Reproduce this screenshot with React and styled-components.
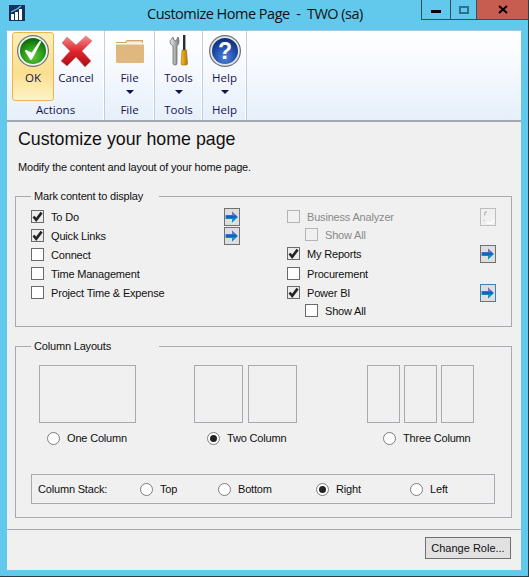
import React from "react";
import styled, { createGlobalStyle } from "styled-components";

const Global = createGlobalStyle`
  html, body { margin: 0; padding: 0; background: #63c9ec; }
  * { box-sizing: border-box; }
`;

const UI_FONT = `"Open Sans", "Noto Sans", "Liberation Sans", sans-serif`;
const FORM_FONT = `"Liberation Sans", Arial, sans-serif`;

const Window = styled.div`
  width: 529px;
  height: 577px;
  background: #63c9ec;
  border-right: 1px solid #2c3e46;
  border-bottom: 1px solid #2c3e46;
  padding: 0 7px 6px 7px;
  display: flex;
  flex-direction: column;
  font-family: ${FORM_FONT};
  font-size: 11px;
  letter-spacing: -0.18px;
  color: #111;
  overflow: hidden;
`;

const TitleBar = styled.div`
  height: 30px;
  flex: none;
  display: flex;
  align-items: flex-start;
  margin-right: -7px;
`;
const AppLogo = styled.svg`
  width: 16px;
  height: 16px;
  margin: 5px 0 0 2px;
  flex: none;
`;
const Title = styled.div`
  margin: 5px 0 0 122px;
  font-family: ${UI_FONT};
  font-size: 14.5px;
  letter-spacing: -0.5px;
  line-height: 18px;
  white-space: pre;
  color: #111;
  flex: 1;
`;
const Controls = styled.div`
  display: flex;
  height: 20px;
  border: 1px solid #33505e;
  border-top: none;
  border-right: none;
  flex: none;
`;
const Control = styled.div`
  width: ${(p) => p.$w}px;
  display: flex;
  align-items: center;
  justify-content: center;
  border-left: ${(p) => (p.$first ? "none" : "1px solid #33505e")};
  background: ${(p) => (p.$close ? "#c75c50" : "transparent")};
`;
const MinGlyph = styled.span`
  width: 10px;
  height: 3px;
  background: #000;
  margin-top: 3px;
`;
const MaxGlyph = styled.span`
  width: 10px;
  height: 8px;
  border: 2px solid #2f6f8e;
`;

const Ribbon = styled.div`
  height: 92px;
  flex: none;
  display: flex;
  background: linear-gradient(#ffffff 0%, #f5f9fe 45%, #e6effa 100%);
  border-top: 1px solid #a9c4d2;
  border-bottom: 2px solid #a3a9b0;
`;
const RibbonGroup = styled.div`
  width: ${(p) => p.$w}px;
  flex: none;
  display: flex;
  flex-direction: column;
  border-right: 1px solid #c4cdd8;
  box-shadow: inset -1px 0 0 #ffffff;
`;
const RibbonItems = styled.div`
  height: 71px;
  flex: none;
  display: flex;
  padding: 1px 0 0 ${(p) => p.$pad || 0}px;
`;
const RibbonButton = styled.div`
  width: ${(p) => p.$w}px;
  height: 69px;
  flex: none;
  display: flex;
  flex-direction: column;
  align-items: center;
  padding-top: 1px;
  border-radius: 3px;
  color: #13134d;
  font-family: ${UI_FONT};
  font-size: 11.5px;
  letter-spacing: 0;
  line-height: 16px;
  border: 1px solid ${(p) => (p.$active ? "#f0b44c" : "transparent")};
  background: ${(p) =>
    p.$active
      ? "linear-gradient(#fdeeb8 0%, #fbe29a 45%, #fbdf8f 60%, #fdf3c6 100%)"
      : "transparent"};
`;
const RibbonIcon = styled.svg`
  width: 34px;
  height: 34px;
  flex: none;
  margin-bottom: 2px;
`;
const Caret = styled.span`
  width: 0;
  height: 0;
  margin-top: 4px;
  border-left: 4px solid transparent;
  border-right: 4px solid transparent;
  border-top: 4px solid #13134d;
`;
const GroupLabel = styled.div`
  flex: 1;
  text-align: center;
  color: #13134d;
  font-family: ${UI_FONT};
  font-size: 11.5px;
  letter-spacing: 0;
  line-height: 16px;
`;

const Main = styled.div`
  flex: 1;
  min-height: 0;
  background: #f0f0f0;
  display: flex;
  flex-direction: column;
  padding: 0 9px 0 8px;
`;
const Heading = styled.h1`
  margin: 7px 0 0 3px;
  font-weight: 400;
  font-size: 17.8px;
  letter-spacing: 0;
  line-height: 20px;
`;
const Description = styled.p`
  margin: 10px 0 0 3px;
  line-height: 16px;
`;

const GroupBox = styled.fieldset`
  margin: ${(p) => p.$top}px 0 0 0;
  padding: 0 15px;
  height: ${(p) => p.$h}px;
  border: 1px solid #a9a9b0;
  min-width: 0;
`;
const Legend = styled.legend`
  width: 128px;
  padding: 0 3px;
  line-height: 14px;
  font-size: 11px;
`;

const OptionGrid = styled.div`
  display: grid;
  grid-template-columns: 209px 209px;
  column-gap: 47px;
  margin-top: 4px;
`;
const OptionColumn = styled.div`
  display: flex;
  flex-direction: column;
`;
const OptionRow = styled.div`
  height: ${(p) => p.$h || 19}px;
  display: flex;
  align-items: center;
  padding-left: ${(p) => (p.$sub ? 18 : 0)}px;
  color: ${(p) => (p.$disabled ? "#8a8a8a" : "inherit")};
`;
const Check = styled.span`
  width: 13px;
  height: 13px;
  flex: none;
  background: ${(p) => (p.$disabled ? "#f0f0f0" : p.$checked ? "#ececec" : "#fff")};
  border: 1px solid ${(p) => (p.$disabled ? "#b4b4b4" : "#6a6a6a")};
  margin-right: 7px;
  display: flex;
  align-items: center;
  justify-content: center;
`;
const OptionText = styled.span`
  flex: 1;
  white-space: nowrap;
`;
const ArrowBtn = styled.span`
  width: 16px;
  height: 18px;
  flex: none;
  display: flex;
  align-items: center;
  justify-content: center;
  background: ${(p) => (p.$disabled ? "#f0f0f0" : "#dedede")};
  border: 1px solid
    ${(p) => (p.$focus ? "#3d81b5" : p.$disabled ? "#bdbdbd" : "#707070")};
`;

const Layouts = styled.div`
  display: grid;
  grid-template-columns: 155px 173px 107px;
  margin: 12px 0 0 8px;
`;
const LayoutOption = styled.div`
  display: flex;
  flex-direction: column;
`;
const Preview = styled.div`
  display: flex;
  gap: ${(p) => p.$gap}px;
  height: 58px;
`;
const PreviewPane = styled.div`
  width: ${(p) => p.$w}px;
  border: 1px solid #a9a9b0;
`;
const RadioRow = styled.div`
  display: flex;
  align-items: center;
  height: 16px;
  margin: 7px 0 0 ${(p) => p.$left}px;
  white-space: nowrap;
`;
const Radio = styled.span`
  width: 13px;
  height: 13px;
  flex: none;
  border-radius: 50%;
  background: #fff;
  border: 1px solid #7d7d7d;
  margin-right: 7px;
  display: flex;
  align-items: center;
  justify-content: center;
  &::after {
    content: "";
    width: 7px;
    height: 7px;
    border-radius: 50%;
    background: ${(p) => (p.$on ? "#222" : "transparent")};
  }
`;
const StackBox = styled.div`
  display: grid;
  grid-template-columns: 102px 78px 98px 94px auto;
  align-items: center;
  height: 30px;
  margin: 28px 1px 0 0;
  padding-left: 6px;
  border: 1px solid #a9a9b0;
`;
const StackOption = styled.div`
  display: flex;
  align-items: center;
`;

const Footer = styled.div`
  margin: 11px -9px 0 -8px;
  flex: 1;
  border-top: 1px solid #a9a9b0;
  display: flex;
  justify-content: flex-end;
  align-items: flex-start;
  padding: 7px 10px 0 0;
`;
const RoleButton = styled.button`
  width: 86px;
  height: 22px;
  padding: 0;
  font-family: inherit;
  font-size: 11px;
  color: #111;
  background: #e1e1e1;
  border: 1px solid #6f6f6f;
`;

const Tick = () => (
  <svg width="11" height="11" viewBox="0 0 11 11">
    <path d="M1.5 5.5 L4.2 8.8 L9.6 1.6" fill="none" stroke="#222" strokeWidth="2.6" />
  </svg>
);

const Arrow = () => (
  <svg width="14" height="14" viewBox="0 0 14 14">
    <path d="M0.5 5 H7 V1 L13.5 7 H0.5 Z" fill="#6f74c8" />
    <path d="M0.5 7 H13.5 L7 13 V9 H0.5 Z" fill="#0b98c8" />
    <path d="M1 6.2 H11.5 M1 7.6 H11.5" stroke="#1263bd" strokeWidth="1.4" fill="none" />
    <path d="M7.5 1 L13.5 7 L7.5 13" stroke="#ffffff" strokeWidth="0.6" fill="none" />
  </svg>
);

const DisabledArrow = () => (
  <svg width="14" height="16" viewBox="0 0 14 16">
    <path d="M4 3 H6 M4 3 V6 M3 6 H4 M3 11 V12" stroke="#a8a8a8" fill="none" />
    <path d="M6 14 H11 L13.5 10.5" stroke="#fff" strokeWidth="1.4" fill="none" />
  </svg>
);

const OkIcon = () => (
  <RibbonIcon viewBox="0 0 34 34">
    <defs>
      <radialGradient id="okg" cx="50%" cy="70%" r="65%">
        <stop offset="0" stopColor="#5fc93a" />
        <stop offset="0.6" stopColor="#2a9a1a" />
        <stop offset="1" stopColor="#0f6a10" />
      </radialGradient>
    </defs>
    <circle cx="17" cy="17" r="16" fill="#6f7570" />
    <circle cx="17" cy="17" r="14.8" fill="#f2f4f2" />
    <circle cx="17" cy="17" r="13" fill="url(#okg)" />
    <path d="M10 17 L15 25 L24 8 L16 20 Z" fill="#fff" stroke="#fff" strokeWidth="2" strokeLinejoin="round" />
  </RibbonIcon>
);

const CancelIcon = () => (
  <RibbonIcon viewBox="0 0 34 34">
    <defs>
      <linearGradient id="xg" x1="0" y1="0" x2="0" y2="1">
        <stop offset="0" stopColor="#f28a8e" />
        <stop offset="0.5" stopColor="#e0242c" />
        <stop offset="1" stopColor="#a90d14" />
      </linearGradient>
    </defs>
    <path d="M3 9 L8 3 L17 11 L27 2 L33 7 L23 17 L32 27 L26 33 L17 23 L8 32 L2 27 L11 17 Z" fill="url(#xg)" stroke="#c9767a" strokeWidth="0.6" strokeLinejoin="round" />
  </RibbonIcon>
);

const FolderIcon = () => (
  <RibbonIcon viewBox="0 0 34 34">
    <path d="M3 8 H12 L14 6 H30 V9 H3 Z" fill="#cda56e" />
    <path d="M14 7.2 H29 V9.5 H13 Z" fill="#f6ead6" />
    <path d="M3 10.5 H31 V28 Q31 29 30 29 H4 Q3 29 3 28 Z" fill="#dfb77f" />
  </RibbonIcon>
);

const ToolsIcon = () => (
  <RibbonIcon viewBox="0 0 34 34">
    <defs>
      <linearGradient id="wr" x1="0" y1="0" x2="1" y2="0">
        <stop offset="0" stopColor="#ececec" />
        <stop offset="1" stopColor="#7d7d7d" />
      </linearGradient>
      <linearGradient id="sd" x1="0" y1="0" x2="1" y2="0">
        <stop offset="0" stopColor="#f6c021" />
        <stop offset="1" stopColor="#b9770c" />
      </linearGradient>
    </defs>
    <path d="M8 7 L11 3 L12 6 L14 7 L16 3 C18 7 16.5 11 15 12 L15 29 Q15 31 13 31 Q11 31 11 29 L11 12 C9 11 8 9.5 8 7 Z" fill="url(#wr)" stroke="#5c5c5c" strokeWidth="0.7" />
    <rect x="21" y="1" width="2.4" height="15" fill="#2b2b2b" />
    <path d="M20 16 H24.5 L25.5 29.5 Q25.5 31 24 31 H20.5 Q19 31 19 29.5 Z" fill="url(#sd)" stroke="#8a5a08" strokeWidth="0.5" />
  </RibbonIcon>
);

const HelpIcon = () => (
  <RibbonIcon viewBox="0 0 34 34">
    <defs>
      <radialGradient id="hg" cx="50%" cy="75%" r="75%">
        <stop offset="0" stopColor="#4f86dc" />
        <stop offset="0.6" stopColor="#1d4aa6" />
        <stop offset="1" stopColor="#102c74" />
      </radialGradient>
    </defs>
    <circle cx="17" cy="17" r="16" fill="#6d7078" />
    <circle cx="17" cy="17" r="14.8" fill="#e4e6ea" />
    <circle cx="17" cy="17" r="13" fill="url(#hg)" />
    <text x="17" y="25" textAnchor="middle" fontFamily="Liberation Sans, sans-serif" fontWeight="700" fontSize="23" fill="#fff">?</text>
  </RibbonIcon>
);

const leftOptions = [
  { label: "To Do", checked: true, arrow: true },
  { label: "Quick Links", checked: true, arrow: true },
  { label: "Connect" },
  { label: "Time Management" },
  { label: "Project Time & Expense" },
];

const rightOptions = [
  { label: "Business Analyzer", disabled: true, arrow: true },
  { label: "Show All", disabled: true, sub: true, h: 17 },
  { label: "My Reports", checked: true, arrow: true, h: 21 },
  { label: "Procurement" },
  { label: "Power BI", checked: true, arrow: true, focus: true },
  { label: "Show All", sub: true, h: 17 },
];

const Option = ({ label, checked, disabled, arrow, sub, focus, h }) => (
  <OptionRow $sub={sub} $disabled={disabled} $h={h}>
    <Check $checked={checked} $disabled={disabled}>{checked && <Tick />}</Check>
    <OptionText>{label}</OptionText>
    {arrow && (
      <ArrowBtn $disabled={disabled} $focus={focus}>
        {disabled ? <DisabledArrow /> : <Arrow />}
      </ArrowBtn>
    )}
  </OptionRow>
);

export default function App() {
  return (
    <>
      <Global />
      <Window>
        <TitleBar>
          <AppLogo viewBox="0 0 16 16">
            <rect width="16" height="16" fill="#14305e" />
            <rect x="2" y="9" width="3" height="6" fill="#fff" />
            <rect x="6" y="7" width="3" height="8" fill="#fff" />
            <rect x="10" y="4" width="3" height="11" fill="#fff" />
            <path d="M2 7 L8 4 L12 1" stroke="#6fc7ee" strokeWidth="1.2" fill="none" />
          </AppLogo>
          <Title>{"Customize Home Page  -  TWO (sa)"}</Title>
          <Controls>
            <Control $w={28} $first><MinGlyph /></Control>
            <Control $w={26}><MaxGlyph /></Control>
            <Control $w={52} $close>
              <svg width="10" height="9" viewBox="0 0 10 9">
                <path d="M1 1 L9 8 M9 1 L1 8" stroke="#000" strokeWidth="2" />
              </svg>
            </Control>
          </Controls>
        </TitleBar>

        <Ribbon>
          <RibbonGroup $w={98}>
            <RibbonItems $pad={5}>
              <RibbonButton $w={42} $active>
                <OkIcon />
                OK
              </RibbonButton>
              <RibbonButton $w={44}>
                <CancelIcon />
                Cancel
              </RibbonButton>
            </RibbonItems>
            <GroupLabel>Actions</GroupLabel>
          </RibbonGroup>
          <RibbonGroup $w={50}>
            <RibbonItems>
              <RibbonButton $w={49}>
                <FolderIcon />
                File
                <Caret />
              </RibbonButton>
            </RibbonItems>
            <GroupLabel>File</GroupLabel>
          </RibbonGroup>
          <RibbonGroup $w={48}>
            <RibbonItems>
              <RibbonButton $w={47}>
                <ToolsIcon />
                Tools
                <Caret />
              </RibbonButton>
            </RibbonItems>
            <GroupLabel>Tools</GroupLabel>
          </RibbonGroup>
          <RibbonGroup $w={44}>
            <RibbonItems>
              <RibbonButton $w={43}>
                <HelpIcon />
                Help
                <Caret />
              </RibbonButton>
            </RibbonItems>
            <GroupLabel>Help</GroupLabel>
          </RibbonGroup>
        </Ribbon>

        <Main>
          <Heading>Customize your home page</Heading>
          <Description>Modify the content and layout of your home page.</Description>

          <GroupBox $top={14} $h={138}>
            <Legend>Mark content to display</Legend>
            <OptionGrid>
              <OptionColumn>
                {leftOptions.map((o) => <Option key={o.label} {...o} />)}
              </OptionColumn>
              <OptionColumn>
                {rightOptions.map((o, i) => <Option key={i} {...o} />)}
              </OptionColumn>
            </OptionGrid>
          </GroupBox>

          <GroupBox $top={12} $h={179}>
            <Legend>Column Layouts</Legend>
            <Layouts>
              <LayoutOption>
                <Preview $gap={0}>
                  <PreviewPane $w={97} />
                </Preview>
                <RadioRow $left={8}>
                  <Radio />
                  One Column
                </RadioRow>
              </LayoutOption>
              <LayoutOption>
                <Preview $gap={5}>
                  <PreviewPane $w={49} />
                  <PreviewPane $w={49} />
                </Preview>
                <RadioRow $left={13}>
                  <Radio $on />
                  Two Column
                </RadioRow>
              </LayoutOption>
              <LayoutOption>
                <Preview $gap={4}>
                  <PreviewPane $w={33} />
                  <PreviewPane $w={33} />
                  <PreviewPane $w={33} />
                </Preview>
                <RadioRow $left={16}>
                  <Radio />
                  Three Column
                </RadioRow>
              </LayoutOption>
            </Layouts>
            <StackBox>
              <span>Column Stack:</span>
              <StackOption><Radio />Top</StackOption>
              <StackOption><Radio />Bottom</StackOption>
              <StackOption><Radio $on />Right</StackOption>
              <StackOption><Radio />Left</StackOption>
            </StackBox>
          </GroupBox>

          <Footer>
            <RoleButton>Change Role...</RoleButton>
          </Footer>
        </Main>
      </Window>
    </>
  );
}
